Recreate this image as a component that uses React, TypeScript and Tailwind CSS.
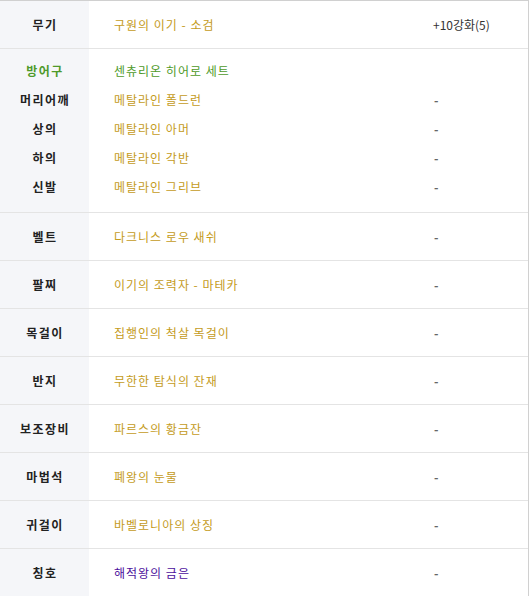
import React from 'react'

type Row = { label: string; name: string; value?: string; color?: string }

const GOLD = 'text-[#c49b1c]'
const GREEN = 'text-[#4e9a2a]'
const PURPLE = 'text-[#4b0f9c]'

const armor: Row[] = [
  { label: '머리어깨', name: '메탈라인 폴드런', value: '-' },
  { label: '상의', name: '메탈라인 아머', value: '-' },
  { label: '하의', name: '메탈라인 각반', value: '-' },
  { label: '신발', name: '메탈라인 그리브', value: '-' },
]

const rows: Row[] = [
  { label: '벨트', name: '다크니스 로우 새쉬', value: '-' },
  { label: '팔찌', name: '이기의 조력자 - 마테카', value: '-' },
  { label: '목걸이', name: '집행인의 척살 목걸이', value: '-' },
  { label: '반지', name: '무한한 탐식의 잔재', value: '-' },
  { label: '보조장비', name: '파르스의 황금잔', value: '-' },
  { label: '마법석', name: '폐왕의 눈물', value: '-' },
  { label: '귀걸이', name: '바벨로니아의 상징', value: '-' },
  { label: '칭호', name: '해적왕의 금은', value: '-', color: PURPLE },
]

function Line({ label, name, value, color = GOLD, labelColor = 'text-[#222]', h = 'h-[47px]' }: Row & { labelColor?: string; h?: string }) {
  return (
    <div className={`grid grid-cols-[89px_344px_1fr] items-center ${h}`}>
      <div className={`text-center font-bold tracking-[1.5px] pl-[1px] ${labelColor}`}>{label}</div>
      <div className={`pl-[25px] tracking-[1px] ${color}`}>{name}</div>
      <div className="text-[#333]">
        {value === '-' ? <span className="pl-[1px] text-[#666] font-bold">-</span> : value}
      </div>
    </div>
  )
}

export default function App() {
  return (
    <div
      className="w-[529px] h-[596px] overflow-hidden bg-white border-t border-r border-[#d0d0d0] text-[12px] leading-none"
      style={{ fontFamily: '"Noto Sans CJK KR", "Noto Sans", sans-serif' }}
    >
      <div className="bg-[linear-gradient(to_right,#f5f6f9_89px,#fff_89px)]">
        <div className="border-b border-[#e4e4e4]">
          <Line label="무기" name="구원의 이기 - 소검" value="+10강화(5)" />
        </div>
        <div className="border-b border-[#e4e4e4] pt-[7px] pb-[11px]">
          <Line label="방어구" name="센츄리온 히어로 세트" labelColor={GREEN} color={GREEN} h="h-[29px]" />
          {armor.map(r => (
            <Line key={r.label} {...r} h="h-[29px]" />
          ))}
        </div>
        {rows.map(r => (
          <div key={r.label} className="border-b border-[#e4e4e4] last:border-b-0">
            <Line {...r} />
          </div>
        ))}
      </div>
    </div>
  )
}
